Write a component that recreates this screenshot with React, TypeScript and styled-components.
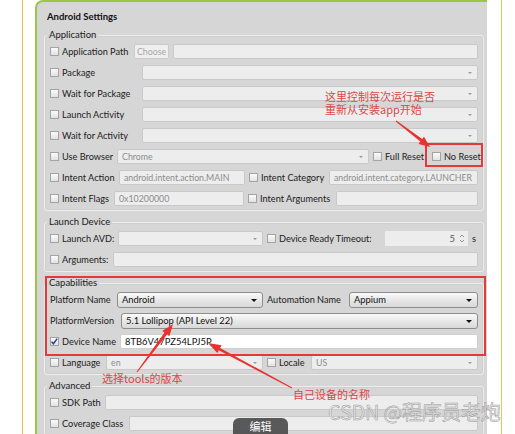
import React from 'react';
import styled, { createGlobalStyle, css } from 'styled-components';

const GlobalStyle = createGlobalStyle`
  html, body {
    margin: 0;
    padding: 0;
    background: #fff;
  }
  body {
    font-family: Lato, "Noto Sans CJK SC", sans-serif;
    font-size: 9.2px;
    color: #1b1b1b;
  }
  * {
    box-sizing: border-box;
  }
`;

type Pt = [number, number];

// tapered arrow: thin tail, wider near the head
const arrowPoints = (s: Pt, e: Pt, w0: number, w1: number, len: number, head: number) => {
  const dx = e[0] - s[0];
  const dy = e[1] - s[1];
  const l = Math.hypot(dx, dy);
  const ux = dx / l;
  const uy = dy / l;
  const nx = -uy;
  const ny = ux;
  const bx = e[0] - ux * len;
  const by = e[1] - uy * len;
  const p = (x: number, y: number, k: number) => `${(x + nx * k).toFixed(1)},${(y + ny * k).toFixed(1)}`;
  return [
    p(s[0], s[1], w0 / 2),
    p(bx, by, w1 / 2),
    p(bx, by, head / 2),
    `${e[0]},${e[1]}`,
    p(bx, by, -head / 2),
    p(bx, by, -w1 / 2),
    p(s[0], s[1], -w0 / 2),
  ].join(' ');
};

const Checkbox = ({ checked }: { checked?: boolean }) => (
  <Box>
    {checked && (
      <svg width="9" height="9" viewBox="0 0 9 9">
        <polyline points="1.6,4.6 3.4,6.8 7.2,1.6" fill="none" stroke="#27408b" strokeWidth="1.5" />
      </svg>
    )}
  </Box>
);

const Check = ({ w, checked, children }: { w?: number; checked?: boolean; children: React.ReactNode }) => (
  <CheckLabel $w={w}>
    <Checkbox checked={checked} />
    <span>{children}</span>
  </CheckLabel>
);

const App = () => {
  return (
    <Page>
      <GlobalStyle />
      <Frame>
        <Panel>
          <Title>Android Settings</Title>

          <Group>
            <Legend>Application</Legend>
            <Rows>
              <Row>
                <Check w={80}>Application Path</Check>
                <ChooseButton>Choose</ChooseButton>
                <Field />
              </Row>
              <Row>
                <Check w={88}>Package</Check>
                <Field $select />
              </Row>
              <Row>
                <Check w={88}>Wait for Package</Check>
                <Field $select />
              </Row>
              <Row>
                <Check w={88}>Launch Activity</Check>
                <Field $select />
              </Row>
              <Row>
                <Check w={88}>Wait for Activity</Check>
                <Field $select />
              </Row>
              <Row>
                <Check w={63}>Use Browser</Check>
                <Field $select $w={252}>Chrome</Field>
                <Check w={55}>Full Reset</Check>
                <Check>No Reset</Check>
              </Row>
              <Row>
                <Check w={65}>Intent Action</Check>
                <Field $w={126}>android.intent.action.MAIN</Field>
                <Check w={76}>Intent Category</Check>
                <Field>android.intent.category.LAUNCHER</Field>
              </Row>
              <Row>
                <Check w={60}>Intent Flags</Check>
                <Field $w={130}>0x10200000</Field>
                <Check w={84}>Intent Arguments</Check>
                <Field />
              </Row>
            </Rows>
          </Group>

          <Group>
            <Legend>Launch Device</Legend>
            <Rows>
              <Row>
                <Check w={64}>Launch AVD:</Check>
                <Field $select $w={145} />
                <Check w={114}>Device Ready Timeout:</Check>
                <Spin>
                  <span>5</span>
                  <Spinner>
                    <svg width="6" height="11" viewBox="0 0 6 11">
                      <polyline points="1,4 3,2 5,4" fill="none" stroke="#8a8a8a" strokeWidth="0.9" />
                      <polyline points="1,7 3,9 5,7" fill="none" stroke="#8a8a8a" strokeWidth="0.9" />
                    </svg>
                  </Spinner>
                </Spin>
                <Unit>s</Unit>
              </Row>
              <Row>
                <Check w={59}>Arguments:</Check>
                <Field />
              </Row>
            </Rows>
          </Group>

          <Group>
            <Legend>Capabilities</Legend>
            <Rows>
              <Row>
                <Label $w={63}>Platform Name</Label>
                <Field $select $tone="strong" $w={146}>Android</Field>
                <Label $w={78}>Automation Name</Label>
                <Field $select $tone="strong">Appium</Field>
              </Row>
              <Row>
                <Label $w={67}>PlatformVersion</Label>
                <Field $select $tone="strong">5.1 Lollipop (API Level 22)</Field>
              </Row>
              <Row>
                <Check w={66} checked>Device Name</Check>
                <Field $tone="white">8TB6V47PZ54LPJ5P</Field>
              </Row>
              <Row>
                <Check w={52}>Language</Check>
                <Field $select $w={157}>en</Field>
                <Check w={40}>Locale</Check>
                <Field $select>US</Field>
              </Row>
            </Rows>
          </Group>

          <Group>
            <Legend>Advanced</Legend>
            <Rows>
              <Row>
                <Check w={51}>SDK Path</Check>
                <Field />
              </Row>
              <Row>
                <Check w={75}>Coverage Class</Check>
                <Field />
              </Row>
            </Rows>
          </Group>
        </Panel>
      </Frame>

      <RedBox style={{ left: 425, top: 143, width: 58, height: 24 }} />
      <RedBox style={{ left: 45, top: 276, width: 441, height: 80 }} />

      <Arrows width="515" height="434" viewBox="0 0 515 434">
        <polygon points={arrowPoints([396, 121], [430, 147], 1, 3.2, 11, 9)} />
        <polygon points={arrowPoints([137, 372], [173, 324], 1, 3.2, 12, 9)} />
        <polygon points={arrowPoints([292, 388], [208, 343], 1, 2.6, 13, 9)} />
      </Arrows>

      <Note style={{ left: 325, top: 90 }}>这里控制每次运行是否</Note>
      <Note style={{ left: 325, top: 103 }}>重新从安装app开始</Note>
      <Note style={{ left: 102, top: 372 }}>选择tools的版本</Note>
      <Note style={{ left: 293, top: 388 }}>自己设备的名称</Note>

      <Watermark>CSDN @程序员老炮</Watermark>
      <EditTab>编辑</EditTab>
    </Page>
  );
};

export default App;

const Page = styled.div`
  position: relative;
  width: 515px;
  height: 434px;
  overflow: hidden;
  background: #fff;
  padding-left: 22px;
`;

const Frame = styled.div`
  width: 480px;
  height: 100%;
  border-left: 1px solid #f2c14e;
  border-right: 1px solid #f2c14e;
  padding: 0 14px 0 12px;
`;

const Panel = styled.div`
  height: 100%;
  background: #d6d6d6;
  border-top: 2px solid #9cc54a;
  border-left: 2px solid #9cc54a;
  border-top-left-radius: 8px;
  padding: 8px 3px 0 7px;
  display: flex;
  flex-direction: column;
  gap: 5px;
`;

const Title = styled.div`
  font-weight: 700;
  font-size: 9.5px;
  line-height: 14px;
  padding-left: 3px;
  color: #111;
`;

const Group = styled.fieldset`
  margin: 0;
  border: 1px solid #ededed;
  border-radius: 3px;
  padding: 3px 5px 4px 5px;
  min-width: 0;
  box-shadow: inset 0 0 0 1px rgba(0, 0, 0, 0.03);
`;

const Legend = styled.legend`
  font-size: 9.5px;
  line-height: 12px;
  padding: 0 2px;
  margin-left: -3px;
  color: #1b1b1b;
`;

const Rows = styled.div`
  display: flex;
  flex-direction: column;
  gap: 6px;
`;

const Row = styled.div`
  display: flex;
  align-items: center;
  gap: 4px;
  height: 15px;
`;

const CheckLabel = styled.label<{ $w?: number }>`
  display: flex;
  align-items: center;
  gap: 3px;
  flex: none;
  white-space: nowrap;
  ${({ $w }) => ($w ? `width: ${$w}px;` : '')}
`;

const Label = styled.span<{ $w: number }>`
  flex: none;
  width: ${({ $w }) => $w}px;
  white-space: nowrap;
`;

const Box = styled.span`
  display: inline-flex;
  flex: none;
  width: 9px;
  height: 9px;
  border: 1px solid #a3a3a3;
  background: linear-gradient(#fbfbfb, #e2e2e2);
  svg {
    margin: -1px;
  }
`;

const Field = styled.div<{ $w?: number; $select?: boolean; $tone?: 'plain' | 'strong' | 'white' }>`
  position: relative;
  display: flex;
  align-items: center;
  height: 15px;
  padding: 0 4px;
  font-size: 8.8px;
  white-space: nowrap;
  overflow: hidden;
  border-radius: 2px;
  flex: ${({ $w }) => ($w ? 'none' : '1')};
  ${({ $w }) => ($w ? `width: ${$w}px;` : '')}
  background: #ededed;
  border: 1px solid #c9c9c9;
  color: #8c8c8c;

  ${({ $tone }) =>
    $tone === 'strong' &&
    css`
      height: 16px;
      background: linear-gradient(#fafafa, #e6e6e6 55%, #d9d9d9);
      border: 1px solid #8d8d8d;
      border-radius: 3px;
      color: #111;
      font-size: 9.4px;
    `}

  ${({ $tone }) =>
    $tone === 'white' &&
    css`
      background: #fff;
      border: 1px solid #d0d0d0;
      color: #111;
      font-size: 9.4px;
    `}

  ${({ $select, $tone }) =>
    $select &&
    css`
      &::after {
        content: '';
        position: absolute;
        right: 5px;
        top: 50%;
        margin-top: -1px;
        border-left: ${$tone === 'strong' ? 3 : 2.5}px solid transparent;
        border-right: ${$tone === 'strong' ? 3 : 2.5}px solid transparent;
        border-top: ${$tone === 'strong' ? 3.5 : 2.5}px solid ${$tone === 'strong' ? '#111' : '#9a9a9a'};
      }
    `}
`;

const ChooseButton = styled.div`
  flex: none;
  width: 35px;
  height: 15px;
  display: flex;
  align-items: center;
  justify-content: center;
  font-size: 8.8px;
  color: #a8a8a8;
  background: #efefef;
  border: 1px solid #cbcbcb;
  border-radius: 2px;
`;

const Spin = styled.div`
  flex: none;
  width: 83px;
  height: 15px;
  display: flex;
  align-items: center;
  justify-content: flex-end;
  gap: 4px;
  padding-right: 3px;
  background: #ededed;
  color: #555;
  font-size: 9.4px;
`;

const Spinner = styled.span`
  display: flex;
`;

const Unit = styled.span`
  font-size: 9.4px;
  color: #222;
`;

const RedBox = styled.div`
  position: absolute;
  border: 2px solid #e2393a;
  pointer-events: none;
`;

const Arrows = styled.svg`
  position: absolute;
  left: 0;
  top: 0;
  pointer-events: none;
  fill: #e8322f;
`;

const Note = styled.div`
  position: absolute;
  font-family: "Noto Sans CJK SC", sans-serif;
  font-size: 11px;
  line-height: 12px;
  color: #d84848;
  white-space: nowrap;
`;

const Watermark = styled.div`
  position: absolute;
  left: 328px;
  top: 401px;
  font-family: "Noto Sans CJK SC", sans-serif;
  font-size: 20px;
  line-height: 22px;
  letter-spacing: -0.3px;
  color: rgba(230, 230, 230, 0.9);
  -webkit-text-stroke: 0.5px rgba(120, 120, 120, 0.75);
  white-space: nowrap;
`;

const EditTab = styled.div`
  position: absolute;
  left: 233px;
  top: 418px;
  width: 55px;
  height: 16px;
  display: flex;
  align-items: center;
  justify-content: center;
  border-radius: 6px 6px 0 0;
  background: rgba(72, 72, 72, 0.9);
  color: #fff;
  font-family: "Noto Sans CJK SC", sans-serif;
  font-size: 11px;
`;
